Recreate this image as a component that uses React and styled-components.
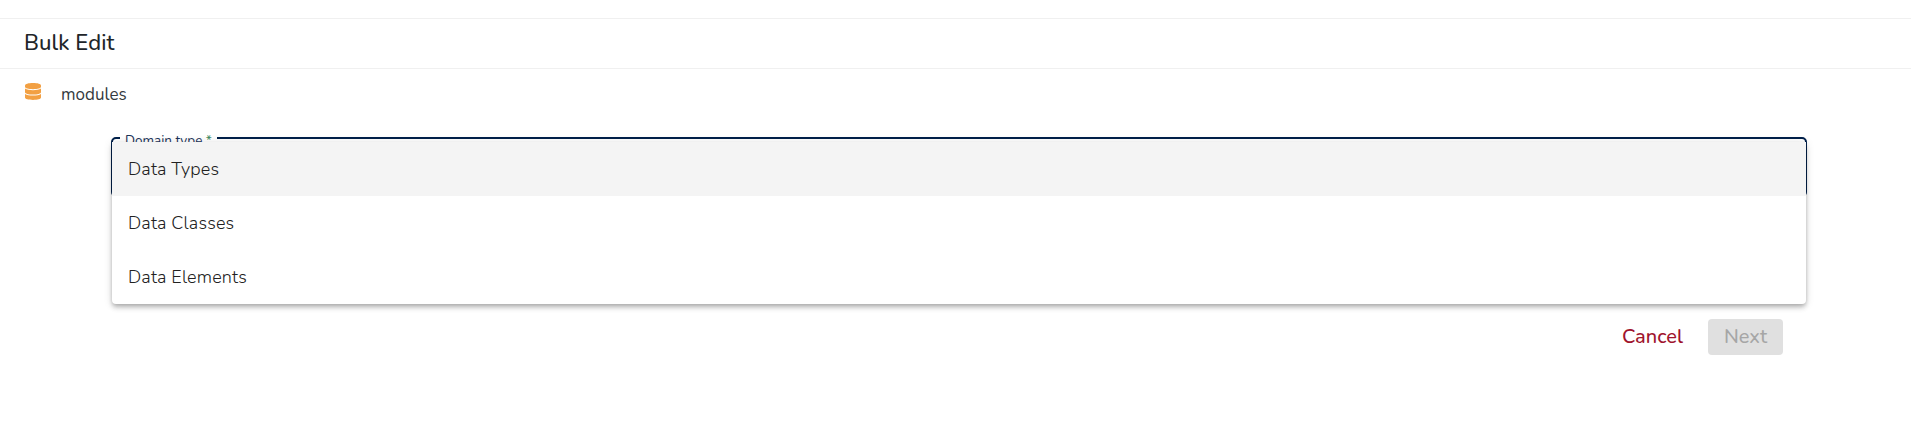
import React from "react";
import styled, { createGlobalStyle } from "styled-components";

const GlobalStyle = createGlobalStyle`
  *, *::before, *::after { box-sizing: border-box; }
  body {
    margin: 0;
    background: #fff;
    color: #212121;
    font-family: Nunito, "Open Sans", "Noto Sans", sans-serif;
    overflow: hidden;
  }
`;

const Page = styled.main`
  height: 432px;
  padding-top: 18px;
  overflow: hidden;
`;

const Header = styled.header`
  display: flex;
  align-items: center;
  height: 51px;
  padding: 0 24px;
  border-top: 1px solid #f0f0f0;
  border-bottom: 1px solid #f0f0f0;
`;

const Title = styled.h1`
  margin: 0;
  padding-bottom: 2px;
  font-size: 22px;
  line-height: 30px;
  font-weight: 500;
  letter-spacing: 0.08px;
  color: #212529;
`;

const ModelRow = styled.div`
  display: flex;
  align-items: center;
  gap: 20px;
  height: 49px;
  padding: 0 25px;
`;

const DatabaseIcon = styled.svg`
  width: 16px;
  height: 17px;
  margin-bottom: 4px;
  fill: #f2a043;
`;

const ModelName = styled.span`
  padding-top: 2px;
  font-size: 17px;
  line-height: 24px;
  font-weight: 400;
  letter-spacing: 0;
  color: #343a40;
`;

const Form = styled.form`
  margin: 19px 104px 0 111px;
`;

const Select = styled.div`
  position: relative;
  height: 59px;
`;

const Outline = styled.fieldset`
  height: 60px;
  margin: 0;
  padding: 0 7px;
  border: 2px solid #00204a;
  border-radius: 5px;
`;

const Label = styled.legend`
  height: 2px;
  padding: 0 5px;
  font-size: 13.5px;
  line-height: 7px;
  white-space: nowrap;
  color: #1c3459;
`;

const Required = styled.span`
  color: #3f8a5c;
`;

const Menu = styled.div`
  position: absolute;
  top: 5px;
  left: 1px;
  right: 1px;
  height: 162px;
  border-radius: 0 0 4px 4px;
  background: #fff;
  box-shadow: 0 2px 4px -1px rgba(0, 0, 0, 0.2), 0 4px 5px rgba(0, 0, 0, 0.14),
    0 1px 10px rgba(0, 0, 0, 0.12);
`;

const Option = styled.div`
  display: flex;
  align-items: center;
  height: 54px;
  padding: 0 16px;
  font-size: 18px;
  line-height: 54px;
  font-weight: 300;
  letter-spacing: 0.16px;
  color: #212121;
  background: ${({ $active }) => ($active ? "#f4f4f4" : "transparent")};
`;

const Actions = styled.div`
  display: flex;
  justify-content: flex-end;
  gap: 17px;
  padding: 123px 24px 0 0;
`;

const Button = styled.button`
  width: ${({ $width }) => $width};
  height: 36px;
  padding: 0;
  border: 0;
  border-radius: 4px;
  background: transparent;
  font-family: inherit;
  font-size: 20px;
  line-height: 36px;
  font-weight: 500;
  color: #a0142d;

  &:disabled {
    background: #e0e0e0;
    color: #a6a6a6;
  }
`;

export default function App() {
  return (
    <>
      <GlobalStyle />
      <Page>
        <Header>
          <Title>Bulk Edit</Title>
        </Header>
        <ModelRow>
          <DatabaseIcon viewBox="0 0 16 17" aria-hidden="true">
            <path d="M0 2.4C0 .9 3.4 0 8 0s8 .9 8 2.4v1.4c0 1.4-3.4 2.4-8 2.4S0 5.200 0 3.800z" />
            <path d="M0 5.600c1.700 1.100 4.700 1.600 8 1.600s6.300-.5 8-1.600v3.600c0 1.400-3.400 2.400-8 2.400S0 10.600 0 9.200z" />
            <path d="M0 11c1.700 1.100 4.700 1.600 8 1.600s6.300-.5 8-1.600v3.600c0 1.400-3.400 2.400-8 2.400S0 16 0 14.600z" />
          </DatabaseIcon>
          <ModelName>modules</ModelName>
        </ModelRow>
        <Form>
          <Select>
            <Outline>
              <Label>
                Domain type <Required>*</Required>
              </Label>
            </Outline>
            <Menu>
              <Option $active>Data Types</Option>
              <Option>Data Classes</Option>
              <Option>Data Elements</Option>
            </Menu>
          </Select>
          <Actions>
            <Button type="button" $width="77px">Cancel</Button>
            <Button type="button" $width="75px" disabled>Next</Button>
          </Actions>
        </Form>
      </Page>
    </>
  );
}
